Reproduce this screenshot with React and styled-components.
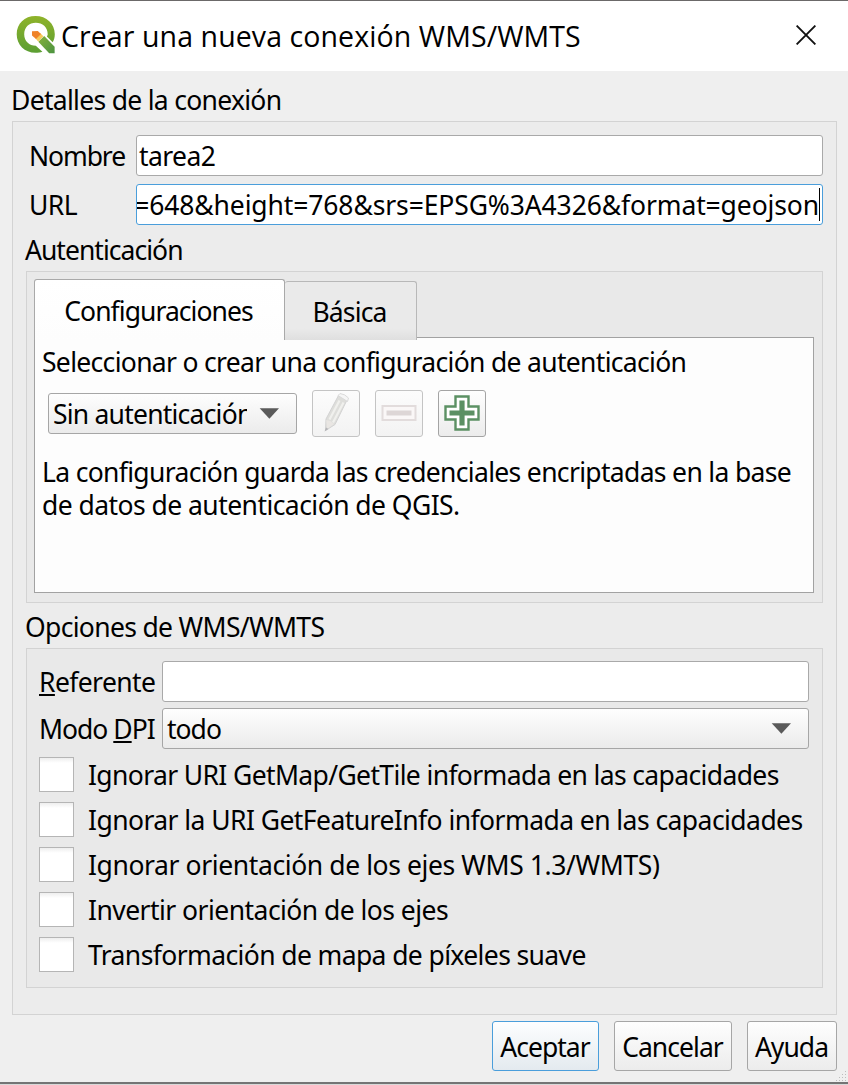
import React from 'react';
import styled, { createGlobalStyle } from 'styled-components';

const GlobalStyle = createGlobalStyle`
  *, *::before, *::after { box-sizing: border-box; }
  html, body { margin: 0; padding: 0; background: #efefef; }
  body { font-family: "Noto Sans", "Open Sans", sans-serif; font-size: 26.5px; color: #000; }
`;

const Window = styled.div`
  display: flex;
  flex-direction: column;
  width: 848px;
  height: 1085px;
  overflow: hidden;
  background: #efefef;
  border-top: 1px solid #6b6969;
`;

const TitleBar = styled.header`
  display: flex;
  align-items: center;
  height: 70px;
  padding: 0 32px 2px 16px;
  background: #fff;
`;

const Title = styled.h1`
  flex: 1;
  margin: 2px 0 0 4px;
  font: 400 28.5px/40px "Open Sans", sans-serif;
  letter-spacing: 0.09px;
  white-space: nowrap;
`;

const CloseButton = styled.button`
  display: flex;
  padding: 0;
  border: 0;
  background: none;
`;

const Text = styled.span`
  display: block;
  line-height: 32px;
  letter-spacing: ${(p) => p.$ls ?? 0}px;
  white-space: nowrap;
`;

const IndentedLabel = styled(Text)`
  padding-left: 3px;
`;

const Paragraph = styled.p`
  margin: 0;
  line-height: 33px;
  white-space: nowrap;
`;

const Line = styled.span`
  letter-spacing: ${(p) => p.$ls}px;
`;

const Body = styled.main`
  display: flex;
  flex-direction: column;
  flex: 1;
  padding: 12px 11px 0 12px;
`;

const Heading = styled.h2`
  height: ${(p) => p.$h}px;
  margin: 0 0 0 -1px;
  padding-top: ${(p) => p.$top ?? 0}px;
  font: inherit;
  line-height: 32px;
  letter-spacing: ${(p) => p.$ls}px;
  white-space: nowrap;
`;

const Group = styled.section`
  height: ${(p) => p.$h}px;
  padding: ${(p) => p.$pad};
  border: 1px solid #d3d3d3;
  background: ${(p) => (p.$inner ? '#e9e9e9' : '#ececec')};
`;

const FormRow = styled.div`
  display: grid;
  grid-template-columns: ${(p) => p.$label}px 1fr;
  align-items: center;
  height: 41px;
  margin-bottom: ${(p) => p.$gap ?? 0}px;
`;

const Field = styled.div`
  display: flex;
  align-items: center;
  justify-content: ${(p) => (p.$end ? 'flex-end' : 'flex-start')};
  height: 41px;
  padding: 0 2px;
  overflow: hidden;
  border: 1px solid ${(p) => (p.$focus ? '#4a9edb' : '#a9a9a9')};
  border-radius: 3px;
  background: #fff;
`;

const Caret = styled.span`
  flex: none;
  width: 1px;
  height: 33px;
  background: #000;
`;

const Combo = styled.div`
  display: flex;
  align-items: center;
  justify-content: space-between;
  width: ${(p) => p.$w ?? 'auto'};
  height: 41px;
  padding: 0 17px 0 4px;
  border: 1px solid #a6a6a6;
  border-radius: 3px;
  background: linear-gradient(#fefefe, #ebebeb);
`;

const ComboValue = styled(Text)`
  width: ${(p) => p.$w ?? 'auto'};
  overflow: hidden;
`;

const Tabs = styled.div`
  display: flex;
  align-items: flex-start;
  height: 58px;
`;

const Tab = styled.div`
  position: relative;
  z-index: 1;
  display: flex;
  justify-content: center;
  width: ${(p) => p.$w}px;
  height: ${(p) => (p.$active ? 61 : 59)}px;
  margin-top: ${(p) => (p.$active ? 0 : 2)}px;
  padding: ${(p) => (p.$active ? 15 : 14)}px 2px 0 0;
  border: 1px solid ${(p) => (p.$active ? '#a9a9a9' : '#b8b8b8')};
  border-bottom: 0;
  border-left-width: ${(p) => (p.$active ? 1 : 0)}px;
  border-radius: 3px 3px 0 0;
  background: ${(p) =>
    p.$active ? 'linear-gradient(#fff, #fdfdfd)' : 'linear-gradient(#eaeaea 80%, #dfdfdf)'};
`;

const TabPane = styled.div`
  display: flex;
  flex-direction: column;
  height: 256px;
  padding: 8px 7px;
  border: 1px solid #a2a2a2;
  background: #fdfdfd;
`;

const ConfigRow = styled.div`
  display: flex;
  align-items: center;
  gap: 15px;
  height: 47px;
  margin: 12px 0 19px 6px;
`;

const ToolButton = styled.button`
  display: flex;
  align-items: center;
  justify-content: center;
  width: 48px;
  height: 47px;
  padding: 0 0 2px;
  border: 1px solid ${(p) => (p.disabled ? '#c4c4c4' : '#a4a4a4')};
  border-radius: 3px;
  background: ${(p) =>
    p.disabled ? 'linear-gradient(#fcfcfc, #f3f3f3)' : 'linear-gradient(#fefefe, #ececec)'};
`;

const CheckRow = styled.label`
  display: flex;
  align-items: center;
  gap: 14px;
  height: 35px;
  margin-bottom: 10px;
`;

const CheckBox = styled.span`
  width: 35px;
  height: 35px;
  border: 1px solid #b5b5b5;
  background: linear-gradient(#eee, #fff 5px);
`;

const Footer = styled.footer`
  display: flex;
  justify-content: flex-end;
  gap: 15px;
  padding-top: 6px;
`;

const DialogButton = styled.button`
  display: flex;
  align-items: center;
  justify-content: center;
  width: ${(p) => p.$w}px;
  height: 50px;
  padding: 1px 1px 0 0;
  border: 1px solid ${(p) => (p.$primary ? '#4a9edb' : '#a6a6a6')};
  border-radius: 3px;
  background: ${(p) =>
    p.$primary ? 'linear-gradient(#fdfeff, #e4eaef)' : 'linear-gradient(#fefefe, #ececec)'};
  color: #000;
  font: inherit;
`;

const BottomEdge = styled.div`
  display: flex;
  flex-direction: column;
  align-items: flex-end;
  height: 14px;
  border-bottom: 1px solid #d9d9d9;
  box-shadow: inset 0 -2px #747474;
`;

const QgisLogo = () => (
  <svg width="41" height="40" viewBox="0 0 41 40">
    <defs>
      <linearGradient id="ring" x1="0" y1="0" x2="0" y2="1">
        <stop offset="0" stopColor="#8fb32a" />
        <stop offset="1" stopColor="#5b9e33" />
      </linearGradient>
      <linearGradient id="stem" x1="0" y1="0" x2="1" y2="1">
        <stop offset="0" stopColor="#86b03c" />
        <stop offset="1" stopColor="#4b9340" />
      </linearGradient>
    </defs>
    <path
      fill="url(#ring)"
      fillRule="evenodd"
      d="M19.5 1C30.5 1 38.800 8.700 38.800 19.200c0 3.400-.8 5.800-2.100 8l-5.800-5.700c.5-1 .8-1.500.8-2.300C31.700 12.300 26.500 7.800 19.800 7.800S8.200 12.300 8.200 19.200s5 11.500 11.600 11.500l6.600 6c-2 .8-4.300 1.100-6.900 1.100C8.500 37.800.7 29.900.7 19.300S8.500 1 19.500 1Z"
    />
    <path fill="url(#stem)" d="M22.300 26.800 28.200 21.100 38.600 31.800V38.200H33.200Z" />
    <path fill="#f6c95a" d="m19.400 23.300 5-5 3 3-5.300 5.300Z" />
    <path fill="#ef8329" d="m16 16.300 5.800-.4 3.200 3.200-5 5-4-3.500Z" />
  </svg>
);

const CloseIcon = () => (
  <svg width="20" height="20" viewBox="0 0 20 20" stroke="#111" strokeWidth="1.9">
    <path d="M.6.6 19.400 19.400M19.400.6.6 19.400" />
  </svg>
);

const Arrow = () => (
  <svg width="20" height="11" viewBox="0 0 20 11">
    <path fill="#5a5a5a" d="M.7.2H20L10.400 10.800Z" />
  </svg>
);

const PencilIcon = () => (
  <svg width="32" height="42" viewBox="0 0 32 42">
    <path fill="#dededb" stroke="#d3d3d3" d="M18.500 3.500 27 8 15 32.500 5.500 38.500 6 27Z" />
    <path fill="#f6f6f6" stroke="#dadada" d="M18 3.500 20 1.500q5 .5 8.500 4.500l-1 3.500Z" />
    <path fill="none" stroke="#f0f0ed" strokeWidth="2.200" d="M19.500 8.500 9.500 27.500M23.500 10.500 13 30.500" />
    <path fill="#e9e6e3" d="m6.300 28 4 1 3.700 3-7 5Z" />
    <path fill="#b5b5b8" d="m6 35.500-1.500 4 4-2.500Z" />
  </svg>
);

const MinusIcon = () => (
  <svg width="36" height="16" viewBox="0 0 36 16">
    <path fill="#faf7f7" stroke="#e2dcdc" strokeWidth="2" d="M1.500 1h33v14h-33Z" />
    <path fill="#ddd6d6" d="M5.500 5.500h25v5h-25Z" />
  </svg>
);

const PlusIcon = () => (
  <svg width="36" height="36" viewBox="0 0 36 36">
    <path
      fill="#fff"
      stroke="#5b9063"
      strokeWidth="2.400"
      d="M11.500 1.500h13v10h10v13h-10v10h-13v-10h-10v-13h10Z"
    />
    <path fill="#5b9063" d="M15.400 5.500h5.200v9.900h9.900v5.200h-9.900v9.900h-5.200v-9.900H5.500v-5.200h9.900Z" />
  </svg>
);

const GripDots = () => (
  <svg width="13" height="11" viewBox="0 0 13 11" fill="#bdbdbd">
    <path d="M10 0h1v1h-1ZM7 3h1v1H7ZM10 3h1v1h-1ZM4 6h1v1H4ZM7 6h1v1H7ZM10 6h1v1h-1ZM1 9h1v1H1ZM4 9h1v1H4ZM7 9h1v1H7ZM10 9h1v1h-1Z" />
  </svg>
);

const Mnemonic = styled.span`
  text-decoration: underline;
  text-decoration-thickness: 2px;
  text-underline-offset: 2px;
  text-decoration-skip-ink: none;
`;

const OPTIONS = [
  ['Ignorar URI GetMap/GetTile informada en las capacidades', -0.63],
  ['Ignorar la URI GetFeatureInfo informada en las capacidades', -0.56],
  ['Ignorar orientación de los ejes WMS 1.3/WMTS)', -0.4],
  ['Invertir orientación de los ejes', -0.54],
  ['Transformación de mapa de píxeles suave', -0.61],
];

export default function App() {
  return (
    <>
      <GlobalStyle />
      <Window>
        <TitleBar>
          <QgisLogo />
          <Title>Crear una nueva conexión WMS/WMTS</Title>
          <CloseButton aria-label="Cerrar"><CloseIcon /></CloseButton>
        </TitleBar>

        <Body>
          <Heading $h={38} $top={1} $ls={-0.7}>Detalles de la conexión</Heading>
          <Group $h={894} $pad="13px 13px 0">
            <FormRow $label={110} $gap={8}>
              <IndentedLabel $ls={-1.1}>Nombre</IndentedLabel>
              <Field><Text $ls={-0.6}>tarea2</Text></Field>
            </FormRow>
            <FormRow $label={110}>
              <IndentedLabel $ls={-0.5}>URL</IndentedLabel>
              <Field $focus $end>
                <Text $ls={-0.12}>=648&amp;height=768&amp;srs=EPSG%3A4326&amp;format=geojson</Text>
                <Caret />
              </Field>
            </FormRow>

            <Heading $h={46} $top={9} $ls={-0.97}>Autenticación</Heading>
            <Group $inner $h={332} $pad="7px 8px 0 7px">
              <Tabs>
                <Tab $active $w={251}><Text $ls={-0.95}>Configuraciones</Text></Tab>
                <Tab $w={132}><Text $ls={-0.85}>Básica</Text></Tab>
              </Tabs>
              <TabPane>
                <Text $ls={-0.68}>Seleccionar o crear una configuración de autenticación</Text>
                <ConfigRow>
                  <Combo $w="249px">
                    <ComboValue $w="194px" $ls={-0.78}>Sin autenticación</ComboValue>
                    <Arrow />
                  </Combo>
                  <ToolButton disabled aria-label="Editar"><PencilIcon /></ToolButton>
                  <ToolButton disabled aria-label="Eliminar"><MinusIcon /></ToolButton>
                  <ToolButton aria-label="Añadir"><PlusIcon /></ToolButton>
                </ConfigRow>
                <Paragraph>
                  <Line $ls={-0.67}>La configuración guarda las credenciales encriptadas en la base</Line>
                  <br />
                  <Line $ls={-0.55}>de datos de autenticación de QGIS.</Line>
                </Paragraph>
              </TabPane>
            </Group>

            <Heading $h={45} $top={8} $ls={-0.67}>Opciones de WMS/WMTS</Heading>
            <Group $inner $h={340} $pad="12px 13px 0 12px">
              <FormRow $label={123} $gap={6}>
                <Text $ls={-0.6}><Mnemonic>R</Mnemonic>eferente</Text>
                <Field />
              </FormRow>
              <FormRow $label={123} $gap={8}>
                <Text $ls={-1}>Modo <Mnemonic>D</Mnemonic>PI</Text>
                <Combo><Text $ls={-1}>todo</Text><Arrow /></Combo>
              </FormRow>
              {OPTIONS.map(([label, ls]) => (
                <CheckRow key={label}>
                  <CheckBox />
                  <Text $ls={ls}>{label}</Text>
                </CheckRow>
              ))}
            </Group>
          </Group>

          <Footer>
            <DialogButton $primary $w={107}><Text $ls={-1}>Aceptar</Text></DialogButton>
            <DialogButton $w={118}><Text $ls={-0.95}>Cancelar</Text></DialogButton>
            <DialogButton $w={90}><Text $ls={-0.95}>Ayuda</Text></DialogButton>
          </Footer>
        </Body>
        <BottomEdge><GripDots /></BottomEdge>
      </Window>
    </>
  );
}
